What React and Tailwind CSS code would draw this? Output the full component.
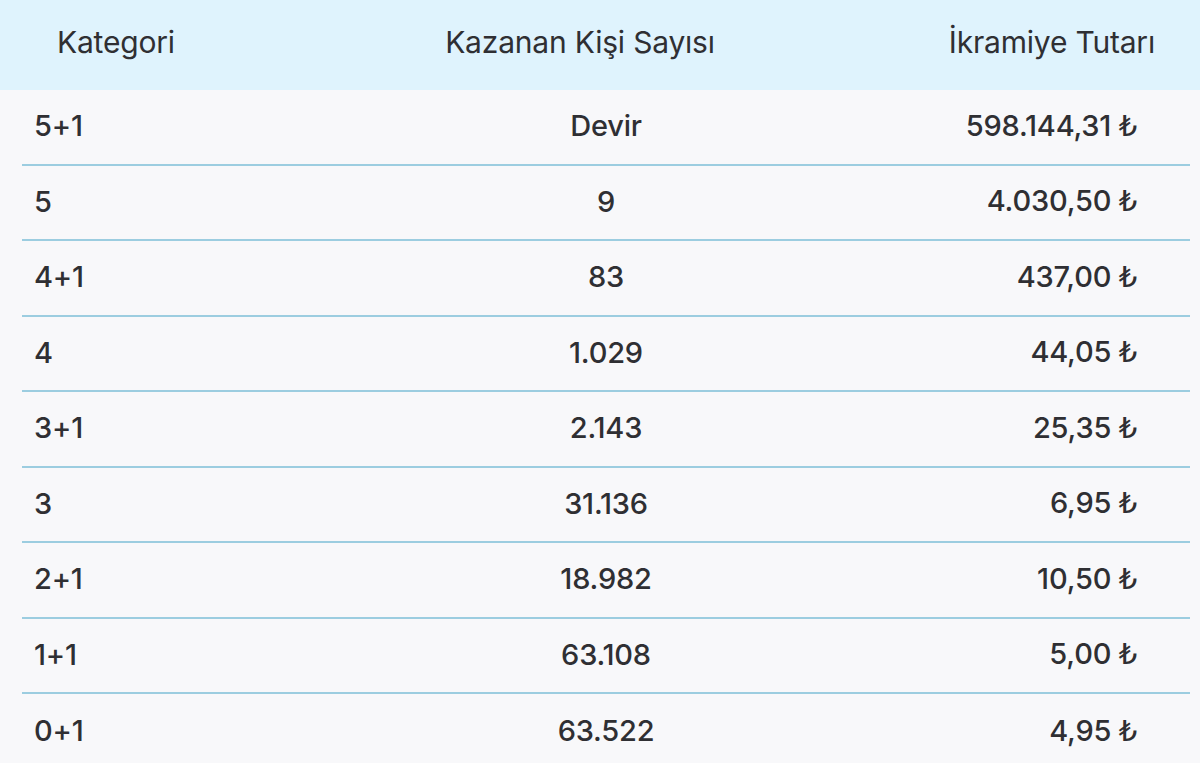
const rows = [
  { cat: '5+1', count: 'Devir', amount: '598.144,31' },
  { cat: '5', count: '9', amount: '4.030,50' },
  { cat: '4+1', count: '83', amount: '437,00' },
  { cat: '4', count: '1.029', amount: '44,05' },
  { cat: '3+1', count: '2.143', amount: '25,35' },
  { cat: '3', count: '31.136', amount: '6,95' },
  { cat: '2+1', count: '18.982', amount: '10,50' },
  { cat: '1+1', count: '63.108', amount: '5,00' },
  { cat: '0+1', count: '63.522', amount: '4,95' },
];

const App = () => {
  return (
    <div
      className="w-[1200px] h-[763px] overflow-hidden bg-[#f8f8fa] text-[#2f2f33]"
      style={{ fontFamily: 'Inter, "Noto Sans", sans-serif' }}
    >
      <div className="h-[90px] bg-[#dff3fd] grid grid-cols-[320px_406px_1fr] items-center pl-[57px] pr-[45px] pb-[6px] text-[30px] tracking-[-0.2px]">
        <div>Kategori</div>
        <div className="text-center">Kazanan Kişi Sayısı</div>
        <div className="text-right">İkramiye Tutarı</div>
      </div>
      <div className="mx-[22px] w-[1168px]">
        {rows.map((r, i) => (
          <div
            key={r.cat}
            className={
              'h-[75.5px] grid grid-cols-[400px_344px_1fr] items-center pl-[12px] pr-[53px] pb-[2px] text-[29px] font-medium tracking-[-0.2px] ' +
              (i < rows.length - 1 ? 'border-b-2 border-[#9ccde0]' : '')
            }
          >
            <div>{r.cat}</div>
            <div className="text-center">{r.count}</div>
            <div className="text-right">
              {r.amount}{' '}
              <span className="font-normal" style={{ fontFamily: '"DejaVu Sans", sans-serif' }}>₺</span>
            </div>
          </div>
        ))}
      </div>
    </div>
  );
};

export default App;
